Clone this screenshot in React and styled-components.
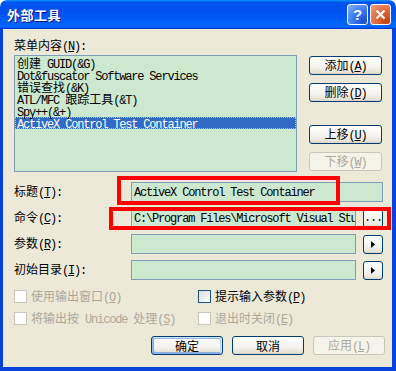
import styled, { createGlobalStyle, css } from "styled-components";

const GlobalStyle = createGlobalStyle`
  html, body {
    margin: 0;
    padding: 0;
    background: #ffffff;
  }
  body {
    font-family: "Noto Sans CJK SC", sans-serif;
    font-size: 12px;
    line-height: 12px;
    color: #000000;
  }
`;

const Window = styled.div`
  width: 396px;
  height: 371px;
  display: flex;
  flex-direction: column;
  overflow: hidden;
`;

const TitleBar = styled.div`
  height: 29px;
  flex: none;
  box-sizing: border-box;
  display: flex;
  align-items: center;
  justify-content: space-between;
  padding: 0 5px 0 7px;
  border-radius: 7px 7px 0 0;
  background: linear-gradient(180deg, #0997ff, #0053ee 8%, #0050ee 40%, #0066ff 88%, #0066ff 93%, #005bff 95%, #003dd7 96%, #003dd7);
`;

const Title = styled.div`
  color: #ffffff;
  font-weight: 700;
  font-size: 13px;
  letter-spacing: 0.5px;
  text-shadow: 1px 1px #0f1089;
`;

const Controls = styled.div`
  display: flex;
  gap: 2px;
`;

const CaptionButton = styled.div`
  width: 21px;
  height: 21px;
  box-sizing: border-box;
  border: 1px solid #ffffff;
  border-radius: 3px;
  display: flex;
  align-items: center;
  justify-content: center;
  color: #ffffff;
  font: 700 15px/1 "Liberation Sans", sans-serif;
  background: ${(p) =>
    p.$close
      ? "radial-gradient(circle at 85% 85%, #c0400f 0%, #e0643a 45%, #f0a080 100%)"
      : "radial-gradient(circle at 85% 85%, #1a4fd0 0%, #3a7af0 50%, #8ab4ff 100%)"};
`;

const Frame = styled.div`
  flex: 1;
  position: relative;
  display: flex;
  flex-direction: column;
  box-sizing: border-box;
  background: #ece9d8;
  border-style: solid;
  border-color: #0842d8;
  border-width: 0 4px 4px 3px;
  padding: 10px 9px 0 11px;
`;

const Latin = styled.span`
  font-family: "Liberation Mono", monospace;
  font-size: 12px;
  letter-spacing: -1.2px;
  white-space: pre;
`;

const Cjk = styled.span`
  font-family: "Noto Sans CJK SC", sans-serif;
  font-size: 12px;
`;

const Label = styled.span`
  white-space: nowrap;
`;

const toRuns = (text) => {
  const chars = [];
  for (let i = 0; i < text.length; i++) {
    if (text[i] === "^") {
      chars.push({ c: text[++i], u: true });
      continue;
    }
    chars.push({ c: text[i], u: false });
  }
  const runs = [];
  chars.forEach((ch) => {
    const latin = ch.c.charCodeAt(0) < 0x2e80;
    const last = runs[runs.length - 1];
    if (last && last.latin === latin) last.chars.push(ch);
    else runs.push({ latin, chars: [ch] });
  });
  return runs;
};

const Txt = ({ children }) => (
  <Label>
    {toRuns(children).map((run, i) => {
      const inner = run.chars.map((ch, j) => (ch.u ? <u key={j}>{ch.c}</u> : ch.c));
      return run.latin ? <Latin key={i}>{inner}</Latin> : <Cjk key={i}>{inner}</Cjk>;
    })}
  </Label>
);

const SectionLabel = styled.div`
  height: 12px;
  margin-bottom: 4px;
`;

const ListArea = styled.div`
  display: grid;
  grid-template-columns: 283px 73px;
  column-gap: 12px;
  height: 117px;
`;

const ListBox = styled.div`
  box-sizing: border-box;
  border: 1px solid #7f9db9;
  background: #cce8cf;
  padding: 1px 0;
  overflow: hidden;
`;

const ListItem = styled.div`
  height: 12px;
  line-height: 12px;
  padding-left: 2px;
  white-space: nowrap;
  ${(p) =>
    p.$selected &&
    css`
      background: #316ac5;
      color: #ffffff;
      outline: 1px dotted #e8b96a;
      outline-offset: -1px;
    `}
`;

const SideButtons = styled.div`
  display: flex;
  flex-direction: column;
  padding-top: 1px;
`;

const Button = styled.div`
  box-sizing: border-box;
  height: 19px;
  width: ${(p) => p.$w || 73}px;
  flex: none;
  display: flex;
  align-items: center;
  justify-content: center;
  border: 1px solid #003c74;
  border-radius: 3px;
  background: linear-gradient(180deg, #ffffff, #f3f2ee 60%, #e6e3d6 90%, #d6d0c5);
  ${(p) =>
    p.$default &&
    css`
      box-shadow: inset -1px 1px #cee7ff, inset 1px 2px #98b8ea, inset -2px 2px #bcd4f6, inset 1px -1px #89ade4, inset 2px -2px #89ade4;
    `}
  ${(p) =>
    p.$disabled &&
    css`
      border-color: #c9c7ba;
      background: #f5f4ea;
      color: #aca899;
    `}
`;

const SideButton = styled(Button)`
  margin-top: ${(p) => p.$gap || 0}px;
`;

const Fields = styled.div`
  margin-top: 10px;
  display: flex;
  flex-direction: column;
  gap: 6px;
`;

const FieldRow = styled.div`
  display: grid;
  grid-template-columns: 117px 1fr;
  align-items: center;
  height: 20px;
`;

const InputLine = styled.div`
  display: flex;
  align-items: center;
  gap: 7px;
  min-width: 0;
`;

const Input = styled.div`
  flex: 1;
  min-width: 0;
  box-sizing: border-box;
  height: 20px;
  border: 1px solid #7f9db9;
  background: #cce8cf;
  padding: 0 2px;
  display: flex;
  align-items: center;
  white-space: nowrap;
  overflow: hidden;
`;

const Checks = styled.div`
  margin-top: 10px;
  display: grid;
  grid-template-columns: 184px 1fr;
  row-gap: 9px;
`;

const Check = styled.div`
  display: flex;
  align-items: center;
  gap: 4px;
  height: 13px;
  color: ${(p) => (p.$disabled ? "#aca899" : "#000000")};
`;

const Box = styled.span`
  width: 13px;
  height: 13px;
  box-sizing: border-box;
  flex: none;
  border: 1px solid ${(p) => (p.$disabled ? "#cac8bb" : "#1c5180")};
  background: ${(p) => (p.$disabled ? "#ffffff" : "linear-gradient(135deg, #dcdcd7, #ffffff)")};
`;

const ButtonBar = styled.div`
  margin-top: 11px;
  margin-right: -2px;
  display: flex;
  justify-content: flex-end;
  gap: 9px;
`;

const RedBox = styled.div`
  position: absolute;
  box-sizing: border-box;
  border: 4px solid #ff0000;
  pointer-events: none;
`;

const Arrow = () => (
  <svg width="4" height="7" viewBox="0 0 4 7">
    <polygon points="0,0 4,3.5 0,7" fill="#000" />
  </svg>
);

const items = [
  "创建 GUID(&G)",
  "Dot&fuscator Software Services",
  "错误查找(&K)",
  "ATL/MFC 跟踪工具(&T)",
  "Spy++(&+)",
  "ActiveX Control Test Container",
];

const App = () => {
  return (
    <>
      <GlobalStyle />
      <Window>
        <TitleBar>
          <Title>外部工具</Title>
          <Controls>
            <CaptionButton>?</CaptionButton>
            <CaptionButton $close>
              <svg width="11" height="11" viewBox="0 0 11 11">
                <path d="M1.5 1.5 L9.5 9.5 M9.5 1.5 L1.5 9.5" stroke="#fff" strokeWidth="2.2" />
              </svg>
            </CaptionButton>
          </Controls>
        </TitleBar>
        <Frame>
          <SectionLabel>
            <Txt>菜单内容(^N):</Txt>
          </SectionLabel>
          <ListArea>
            <ListBox>
              {items.map((item, i) => (
                <ListItem key={i} $selected={i === items.length - 1}>
                  <Txt>{item}</Txt>
                </ListItem>
              ))}
            </ListBox>
            <SideButtons>
              <SideButton>
                <Txt>添加(^A)</Txt>
              </SideButton>
              <SideButton $gap={8}>
                <Txt>删除(^D)</Txt>
              </SideButton>
              <SideButton $gap={23}>
                <Txt>上移(^U)</Txt>
              </SideButton>
              <SideButton $gap={8} $disabled>
                <Txt>下移(^W)</Txt>
              </SideButton>
            </SideButtons>
          </ListArea>
          <Fields>
            <FieldRow>
              <Txt>标题(^T):</Txt>
              <InputLine>
                <Input>
                  <Txt>ActiveX Control Test Container</Txt>
                </Input>
              </InputLine>
            </FieldRow>
            <FieldRow>
              <Txt>命令(^C):</Txt>
              <InputLine>
                <Input>
                  <Txt>C:\Program Files\Microsoft Visual Studio 8\Common7\Tools\tstcon.exe</Txt>
                </Input>
                <Button $w={20}>
                  <Latin>...</Latin>
                </Button>
              </InputLine>
            </FieldRow>
            <FieldRow>
              <Txt>参数(^R):</Txt>
              <InputLine>
                <Input />
                <Button $w={20}>
                  <Arrow />
                </Button>
              </InputLine>
            </FieldRow>
            <FieldRow>
              <Txt>初始目录(^I):</Txt>
              <InputLine>
                <Input />
                <Button $w={20}>
                  <Arrow />
                </Button>
              </InputLine>
            </FieldRow>
          </Fields>
          <Checks>
            <Check $disabled>
              <Box $disabled />
              <Txt>使用输出窗口(^O)</Txt>
            </Check>
            <Check>
              <Box />
              <Txt>提示输入参数(^P)</Txt>
            </Check>
            <Check $disabled>
              <Box $disabled />
              <Txt>将输出按 Unicode 处理(^S)</Txt>
            </Check>
            <Check $disabled>
              <Box $disabled />
              <Txt>退出时关闭(^E)</Txt>
            </Check>
          </Checks>
          <ButtonBar>
            <Button $w={72} $default>
              <Txt>确定</Txt>
            </Button>
            <Button $w={72}>
              <Txt>取消</Txt>
            </Button>
            <Button $w={72} $disabled>
              <Txt>应用(^L)</Txt>
            </Button>
          </ButtonBar>
          <RedBox style={{ left: 114, top: 147, width: 223, height: 29 }} />
          <RedBox style={{ left: 106, top: 178, width: 282, height: 23 }} />
        </Frame>
      </Window>
    </>
  );
};

export default App;
